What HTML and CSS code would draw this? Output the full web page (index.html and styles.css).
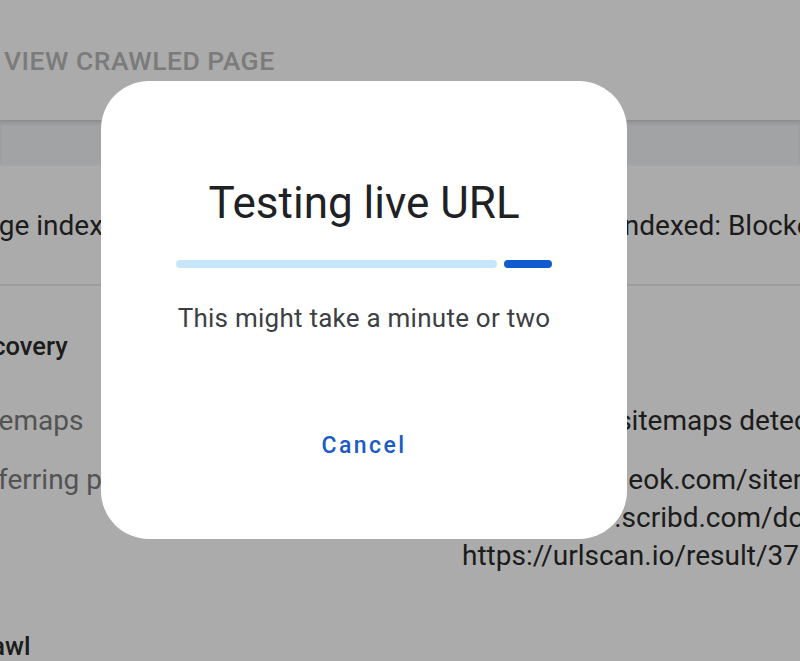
FILE: index.html
```html
<!DOCTYPE html>
<html lang="en">
<head>
    <meta charset="UTF-8">
    <meta name="viewport" content="width=device-width, initial-scale=1.0">
    <title>URL inspection</title>
    <link rel="stylesheet" href="styles.css">
</head>
<body>

    <!-- Tabs -->
    <div class="tabs">
        <span class="tab">VIEW CRAWLED PAGE</span>
    </div>
    <div class="toolbar"></div>

    <!-- Inspection details -->
    <div class="details">
        <div class="row summary">
            <div class="label">Page indexing</div>
            <div class="value">Page is not indexed: Blocked by robots.txt</div>
        </div>

        <div class="section">
            <div class="section-title">Discovery</div>

            <div class="row">
                <div class="label muted">Sitemaps</div>
                <div class="value">No referring sitemaps detected</div>
            </div>

            <div class="row referring">
                <div class="label muted">Referring page</div>
                <div class="value">
                    <div>https://www.ieok.com/sitemap</div>
                    <div>https://www.scribd.com/document</div>
                    <div>https://urlscan.io/result/37a1</div>
                </div>
            </div>

            <div class="section-title crawl">Crawl</div>
        </div>
    </div>

    <!-- Dialog -->
    <div class="scrim"></div>
    <div class="dialog">
        <h1>Testing live URL</h1>
        <div class="progress">
            <div class="track"></div>
            <div class="bar"></div>
        </div>
        <p>This might take a minute or two</p>
        <button class="cancel">Cancel</button>
    </div>

</body>
</html>
```

FILE: styles.css
```css
/* Page */
body {
    margin: 0;
    width: 800px;
    height: 661px;
    overflow: hidden;
    background-color: #ffffff;
    font-family: Roboto, "Noto Sans", sans-serif;
    color: #2b2b2b;
}

/* Tabs */
.tabs {
    height: 120px;
    padding-left: 4px;
    box-sizing: border-box;
    padding-top: 45px;
}

.tab {
    font-size: 26.5px;
    font-weight: 500;
    letter-spacing: 0.5px;
    color: #b8b8b8;
}

.toolbar {
    height: 44px;
    background-color: #f2f3f5;
    border-top: 1px solid #d4d4d4;
    border-bottom: 1px solid #f8f8f8;
    box-shadow: inset 0 3px 3px rgba(0, 0, 0, 0.08);
}

/* Details */
.details {
    margin-left: -34px;
}

.row {
    display: grid;
    grid-template-columns: 496px 1fr;
    font-size: 28px;
    line-height: 38px;
    white-space: nowrap;
}

.row.summary {
    height: 120px;
    align-items: center;
    border-bottom: 2px solid #ececec;
    padding-top: 2px;
    box-sizing: border-box;
}

.summary .value {
    padding-left: 9px;
}

.muted {
    color: #7c7c7c;
}

.section {
    padding-top: 41px;
}

.section-title {
    font-size: 25.5px;
    font-weight: 500;
    line-height: 38px;
    margin-bottom: 37px;
    margin-left: -10px;
}

.referring {
    margin-top: 21px;
}

.section-title.crawl {
    margin-top: 52px;
    margin-left: 0;
}

/* Dialog */
.scrim {
    position: fixed;
    inset: 0;
    background-color: rgba(0, 0, 0, 0.33);
}

.dialog {
    position: absolute;
    left: 101px;
    top: 81px;
    width: 526px;
    height: 458px;
    background-color: #ffffff;
    border-radius: 48px;
    text-align: center;
    box-sizing: border-box;
    padding-top: 96px;
}

.dialog h1 {
    margin: 0;
    font-size: 44px;
    font-weight: 400;
    line-height: 52px;
    color: #202124;
}

.progress {
    display: flex;
    gap: 7px;
    width: 376px;
    margin: 31px auto 0;
}

.track {
    flex: 1;
    height: 8px;
    border-radius: 4px;
    background-color: #c8e6fa;
}

.bar {
    width: 48px;
    height: 8px;
    border-radius: 4px;
    background-color: #0f5bcf;
}

.dialog p {
    margin: 34px 0 0;
    font-size: 26px;
    letter-spacing: 0.25px;
    line-height: 32px;
    color: #3c4043;
}

.cancel {
    margin-top: 96px;
    padding: 0 12px;
    background: none;
    border: none;
    font-family: Roboto, "Noto Sans", sans-serif;
    font-size: 23px;
    font-weight: 500;
    letter-spacing: 2.4px;
    line-height: 32px;
    color: #1a5bc4;
    cursor: pointer;
}
```
